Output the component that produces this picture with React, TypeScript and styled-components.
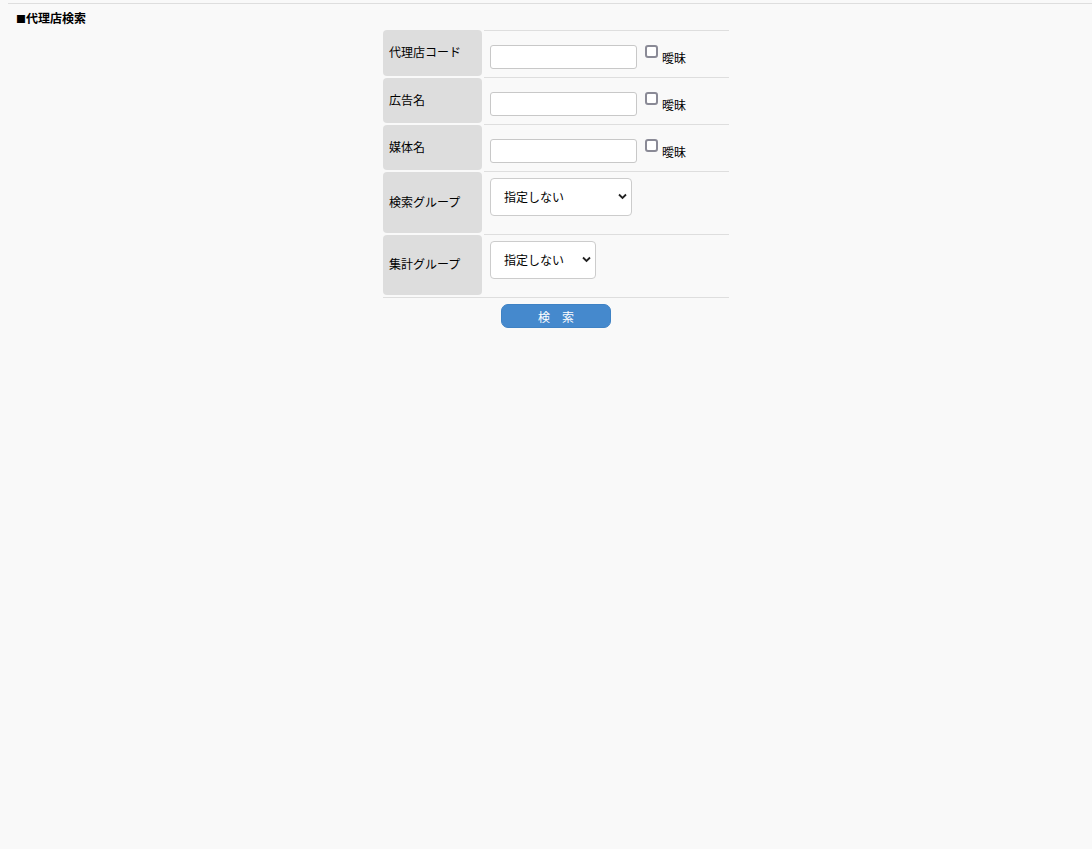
import styled, { createGlobalStyle } from "styled-components";

type RowProps = {
  $first?: boolean;
  $last?: boolean;
  $height: number;
  $padTop: number;
};

type SelectProps = {
  $width: number;
};

const GlobalStyle = createGlobalStyle`
  html, body {
    margin: 0;
    padding: 0;
    background: #f9f9f9;
  }
  body {
    font-family: "Noto Sans CJK JP", "Noto Sans", sans-serif;
    font-size: 12px;
    color: #000;
  }
`;

const Page = styled.div`
  padding-top: 3px;
  min-height: 846px;
`;

const HeaderRule = styled.div`
  margin-left: 8px;
  border-top: 1px solid #dedede;
`;

const Title = styled.h1`
  height: 16px;
  margin: 6px 0 0 16px;
  font-size: 12px;
  font-weight: bold;
  line-height: 16px;
`;

const Square = styled.span`
  font-size: 10px;
  line-height: 10px;
`;

const FormArea = styled.div`
  display: flex;
  justify-content: center;
  padding: 4px 0 0 20px;
`;

const FormTable = styled.div`
  width: 346px;
  border-bottom: 1px solid #dedede;
`;

const Row = styled.div`
  display: flex;
`;

const Label = styled.div`
  width: 99px;
  margin: 0 2px 2px 0;
  padding: 0 0 2px 6px;
  box-sizing: border-box;
  display: flex;
  align-items: center;
  background: #dddddd;
  border-radius: 4px;
  font-size: 12px;
  line-height: 14px;
`;

const Value = styled.div<RowProps>`
  flex: 1;
  display: flex;
  align-items: flex-start;
  height: ${(p) => p.$height}px;
  padding: ${(p) => p.$padTop}px 0 0 6px;
  box-sizing: border-box;
  border-top: ${(p) => (p.$first ? "1px solid #dedede" : "none")};
  border-bottom: ${(p) => (p.$last ? "none" : "1px solid #dedede")};
`;

const TextInput = styled.input`
  width: 147px;
  height: 24px;
  box-sizing: border-box;
  margin: 0;
  border: 1px solid #c8c8c8;
  border-radius: 3px;
  background: #fff;
  font-size: 12px;
  padding: 0 4px;
`;

const Fuzzy = styled.label`
  display: flex;
  align-items: flex-start;
  margin-left: 8px;
`;

const Check = styled.input`
  appearance: none;
  width: 13px;
  height: 13px;
  margin: 0;
  box-sizing: border-box;
  border: 2px solid #8a8a96;
  border-radius: 3px;
  background: #fff;
`;

const FuzzyText = styled.span`
  margin: 6px 0 0 4px;
  font-size: 12px;
  line-height: 14px;
`;

const SelectWrap = styled.div`
  position: relative;
  display: flex;
`;

const Select = styled.select<SelectProps>`
  appearance: none;
  width: ${(p) => p.$width}px;
  height: 38px;
  box-sizing: border-box;
  margin: 0;
  padding: 0 20px 2px 13px;
  border: 1px solid #cccccc;
  border-radius: 4px;
  background: #fff;
  font-family: "Noto Sans CJK JP", sans-serif;
  font-size: 12px;
  color: #000;
`;

const Chevron = styled.svg`
  position: absolute;
  right: 5px;
  top: 15px;
  width: 9px;
  height: 7px;
  pointer-events: none;
`;

const ButtonRow = styled.div`
  display: flex;
  justify-content: center;
  padding: 6px 0 0 20px;
`;

const SearchButton = styled.button`
  width: 110px;
  height: 24px;
  padding: 2px 0 0;
  border: 1px solid #3f82c4;
  border-radius: 7px;
  background: #4589cd;
  color: #fff;
  font-family: "Noto Sans CJK JP", sans-serif;
  font-size: 12px;
  line-height: 20px;
  cursor: pointer;
`;

const textRows = ["代理店コード", "広告名", "媒体名"];

const GroupSelect = ({ width }: { width: number }) => (
  <SelectWrap>
    <Select $width={width}>
      <option>指定しない</option>
    </Select>
    <Chevron viewBox="0 0 9 7">
      <path d="M1 1.5 L4.5 5 L8 1.5" fill="none" stroke="#222" strokeWidth="1.8" />
    </Chevron>
  </SelectWrap>
);

export default function App() {
  return (
    <Page>
      <GlobalStyle />
      <HeaderRule />
      <Title>
        <Square>■</Square>代理店検索
      </Title>
      <FormArea>
        <FormTable>
          {textRows.map((label, i) => (
            <Row key={label}>
              <Label>{label}</Label>
              <Value $first={i === 0} $height={i === 0 ? 48 : 47} $padTop={14}>
                <TextInput type="text" />
                <Fuzzy>
                  <Check type="checkbox" />
                  <FuzzyText>曖昧</FuzzyText>
                </Fuzzy>
              </Value>
            </Row>
          ))}
          <Row>
            <Label>検索グループ</Label>
            <Value $height={63} $padTop={6}>
              <GroupSelect width={142} />
            </Value>
          </Row>
          <Row>
            <Label>集計グループ</Label>
            <Value $last $height={62} $padTop={6}>
              <GroupSelect width={106} />
            </Value>
          </Row>
        </FormTable>
      </FormArea>
      <ButtonRow>
        <SearchButton type="button">検　索</SearchButton>
      </ButtonRow>
    </Page>
  );
}
